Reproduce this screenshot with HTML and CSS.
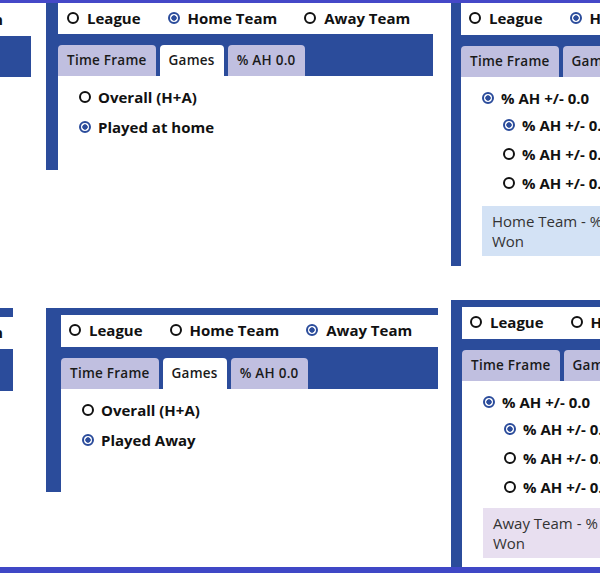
FILE: index.html
```html
<!DOCTYPE html>
<html lang="en">

<head>
    <meta charset="UTF-8">
    <meta name="viewport" content="width=device-width, initial-scale=1.0">
    <title>Team Filters</title>
    <link rel="stylesheet" href="styles.css">
</head>

<body>
    <div class="strip top"></div>

    <!-- HOME TEAM ROW -->
    <div class="row row-home">

        <div class="card stub stub-home">
            <div class="radio-row">
                <span class="choice"><span class="radio"></span>League</span>
                <span class="choice"><span class="radio on"></span>Home Team</span>
                <span class="choice"><span class="radio"></span>Away Team</span>
            </div>
            <div class="band"></div>
        </div>

        <div class="card games games-home">
            <div class="radio-row">
                <span class="choice"><span class="radio"></span>League</span>
                <span class="choice"><span class="radio on"></span>Home Team</span>
                <span class="choice"><span class="radio"></span>Away Team</span>
            </div>
            <div class="band">
                <div class="tab">Time Frame</div>
                <div class="tab active">Games</div>
                <div class="tab">% AH 0.0</div>
            </div>
            <ul class="options">
                <li><span class="radio"></span>Overall (H+A)</li>
                <li><span class="radio on"></span>Played at home</li>
            </ul>
        </div>

        <div class="card handicap handicap-home">
            <div class="radio-row">
                <span class="choice"><span class="radio"></span>League</span>
                <span class="choice"><span class="radio on"></span>Home Team</span>
                <span class="choice"><span class="radio"></span>Away Team</span>
            </div>
            <div class="band">
                <div class="tab">Time Frame</div>
                <div class="tab">Games</div>
                <div class="tab active">% AH 0.0</div>
            </div>
            <div class="ah-list">
                <div class="ah-parent"><span class="radio on"></span>% AH +/- 0.0</div>
                <div class="ah-child"><span class="radio on"></span>% AH +/- 0.0 Won</div>
                <div class="ah-child"><span class="radio"></span>% AH +/- 0.0 Draw</div>
                <div class="ah-child"><span class="radio"></span>% AH +/- 0.0 Lost</div>
            </div>
            <div class="info info-home">Home Team - % AH +/- 0.0<br>Won</div>
        </div>

    </div>

    <!-- AWAY TEAM ROW -->
    <div class="row row-away">

        <div class="card stub stub-away">
            <div class="radio-row">
                <span class="choice"><span class="radio"></span>League</span>
                <span class="choice"><span class="radio"></span>Home Team</span>
                <span class="choice"><span class="radio on"></span>Away Team</span>
            </div>
            <div class="band"></div>
        </div>

        <div class="card games games-away">
            <div class="radio-row">
                <span class="choice"><span class="radio"></span>League</span>
                <span class="choice"><span class="radio"></span>Home Team</span>
                <span class="choice"><span class="radio on"></span>Away Team</span>
            </div>
            <div class="band">
                <div class="tab">Time Frame</div>
                <div class="tab active">Games</div>
                <div class="tab">% AH 0.0</div>
            </div>
            <ul class="options">
                <li><span class="radio"></span>Overall (H+A)</li>
                <li><span class="radio on"></span>Played Away</li>
            </ul>
        </div>

        <div class="card handicap handicap-away">
            <div class="radio-row">
                <span class="choice"><span class="radio"></span>League</span>
                <span class="choice"><span class="radio"></span>Home Team</span>
                <span class="choice"><span class="radio on"></span>Away Team</span>
            </div>
            <div class="band">
                <div class="tab">Time Frame</div>
                <div class="tab">Games</div>
                <div class="tab active">% AH 0.0</div>
            </div>
            <div class="ah-list">
                <div class="ah-parent"><span class="radio on"></span>% AH +/- 0.0</div>
                <div class="ah-child"><span class="radio on"></span>% AH +/- 0.0 Won</div>
                <div class="ah-child"><span class="radio"></span>% AH +/- 0.0 Draw</div>
                <div class="ah-child"><span class="radio"></span>% AH +/- 0.0 Lost</div>
            </div>
            <div class="info info-away">Away Team - % AH +/- 0.0<br>Won</div>
        </div>

    </div>

    <div class="strip bottom"></div>
</body>

</html>
```

FILE: styles.css
```css
* {
    box-sizing: border-box;
}

body {
    margin: 0;
    width: 600px;
    height: 573px;
    overflow: hidden;
    background: #ffffff;
    font-family: "Open Sans", "Noto Sans", sans-serif;
    color: #111111;
    display: flex;
    flex-direction: column;
}

.strip {
    flex-shrink: 0;
    width: 100%;
}

.strip.top {
    height: 3px;
    background-color: #4548c8;
}

.strip.bottom {
    height: 6px;
    background-color: #3f47c6;
}

.row {
    display: flex;
    align-items: flex-start;
    flex-shrink: 0;
}

.row-home {
    height: 297px;
}

.row-away {
    height: 267px;
}

/* card */
.card {
    flex-shrink: 0;
    background: #ffffff;
    border-left: 12px solid #2b4c9b;
}

.radio-row {
    display: flex;
    align-items: center;
    gap: 27px;
    height: 32px;
    padding-left: 8px;
    padding-bottom: 2px;
    font-size: 15px;
    font-weight: 700;
    white-space: nowrap;
}

.choice {
    display: flex;
    align-items: center;
    gap: 8px;
}

.radio {
    display: inline-block;
    flex-shrink: 0;
    width: 12px;
    height: 12px;
    border: 2px solid #111111;
    border-radius: 50%;
}

.radio.on {
    border-color: #2b4c9b;
    background: radial-gradient(circle, #2b4c9b 0 2.4px, transparent 3px);
}

.band {
    display: flex;
    gap: 4px;
    height: 42px;
    padding-top: 11px;
    background-color: #2b4c9b;
}

.tab {
    height: 31px;
    line-height: 30px;
    padding: 0 9px;
    background-color: #c0bfe0;
    border-radius: 4px 4px 0 0;
    font-size: 13.5px;
    font-weight: 600;
    letter-spacing: 0.25px;
    color: #1a1a1a;
    white-space: nowrap;
}

.tab.active {
    background-color: #ffffff;
}

/* games cards */
.options {
    list-style: none;
    margin: 0;
    padding: 7px 0 0 21px;
}

.options li {
    display: flex;
    align-items: center;
    gap: 7px;
    height: 30px;
    padding-bottom: 2px;
    font-size: 15px;
    font-weight: 700;
}

/* handicap cards */
.ah-list {
    padding: 10px 0 0 21px;
    font-size: 15px;
    font-weight: 700;
    white-space: nowrap;
}

.ah-parent,
.ah-child {
    display: flex;
    align-items: center;
    gap: 7px;
    padding-bottom: 2px;
}

.ah-parent {
    height: 24px;
}

.ah-child {
    height: 29px;
    padding-left: 21px;
}

.info {
    margin: 8px 0 10px 21px;
    padding: 5px 10px;
    font-size: 15px;
    line-height: 20px;
    color: #333333;
    white-space: nowrap;
}

.info-home {
    background-color: #d3e2f5;
}

.info-away {
    margin-top: 6px;
    background-color: #e8dff0;
}

/* partial cards on the left edge */
.stub {
    width: 380px;
    border-left: none;
}

.stub .radio-row {
    justify-content: flex-end;
}

.stub-home {
    margin-left: -349px;
}

.stub-home .radio-row {
    height: 33px;
    padding-right: 28px;
}

.stub-home .band {
    height: 41px;
}

.stub-away {
    margin-top: 8px;
    margin-left: -367px;
    border-top: 9px solid #2b4c9b;
}

.stub-away .radio-row {
    padding-right: 10px;
}

/* games cards */
.games-home {
    width: 387px;
    height: 167px;
    margin-left: 15px;
}

.games-home .radio-row {
    height: 31px;
    padding-left: 9px;
}

.games-away {
    width: 392px;
    height: 184px;
    margin-top: 8px;
    margin-left: 33px;
    border-left-width: 15px;
    border-top: 7px solid #2b4c9b;
}

/* handicap cards */
.handicap {
    width: 400px;
    border-left-width: 10px;
}

.handicap-home {
    margin-left: 18px;
}

.handicap-away {
    height: 267px;
    margin-left: 13px;
    border-left-width: 11px;
    border-top: 7px solid #2b4c9b;
}
```
